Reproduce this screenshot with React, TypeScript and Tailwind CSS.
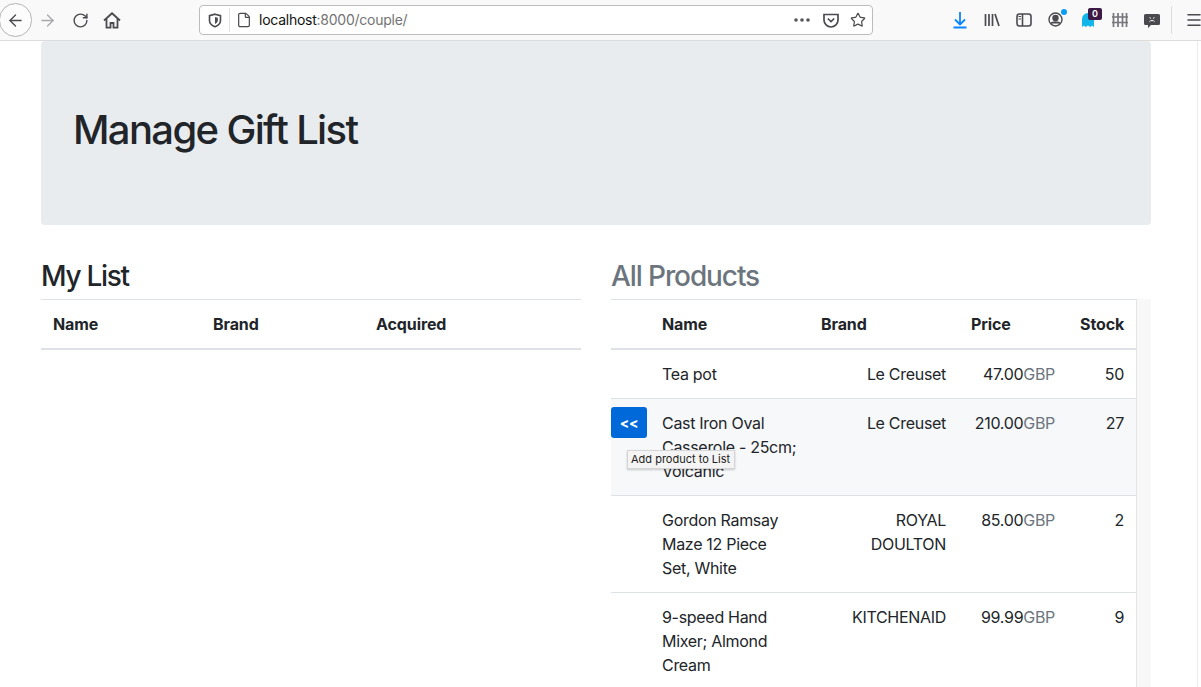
import { ArrowLeft, ArrowRight, RotateCw, File, Star, Menu } from 'lucide-react';

const font = '[font-family:Inter,"Liberation_Sans",sans-serif]';

interface Product {
  name: string[];
  brand: string[];
  price: string;
  stock: number;
}

const products: Product[] = [
  { name: ['Tea pot'], brand: ['Le Creuset'], price: '47.00', stock: 50 },
  { name: ['Cast Iron Oval', 'Casserole - 25cm;', 'Volcanic'], brand: ['Le Creuset'], price: '210.00', stock: 27 },
  { name: ['Gordon Ramsay', 'Maze 12 Piece', 'Set, White'], brand: ['ROYAL', 'DOULTON'], price: '85.00', stock: 2 },
  { name: ['9-speed Hand', 'Mixer; Almond', 'Cream'], brand: ['KITCHENAID'], price: '99.99', stock: 9 },
];

function Toolbar() {
  return (
    <div className="flex h-[41px] shrink-0 items-center overflow-hidden border-b border-[#dcdcdc] bg-[#f9f9fa] text-[#4a4a4f] [&>*]:shrink-0">
      <div className="ml-[-1px] flex h-[34px] w-[33px] items-center justify-center rounded-full border border-[#b4b4b4] bg-[#fcfcfc]">
        <ArrowLeft size={19} strokeWidth={1.7} />
      </div>
      <ArrowRight size={19} strokeWidth={1.7} className="ml-[6px] text-[#a9a9ab]" />
      <RotateCw size={17} strokeWidth={2} className="ml-[15px]" />
      <svg width="18" height="17" viewBox="0 0 18 17" className="ml-[14px]" fill="none" stroke="#4a4a4f" strokeWidth="1.800">
        <path d="M1 8.500 9 1.300l8 7.200" />
        <path d="M3.500 7v8.700h4v-4.700h3v4.700h4V7" />
      </svg>
      <div className="ml-[78px] flex h-[30px] w-[674px] items-center rounded-[4px] border border-[#bcbcbc] bg-white">
        <svg width="14" height="15" viewBox="0 0 14 15" className="ml-[8px]" fill="none" stroke="#4a4a4f" strokeWidth="1.600">
          <path d="M7 1.200 12.500 2.600v5c0 3-2.400 5-5.500 6.200C3.900 12.600 1.500 10.600 1.500 7.600v-5z" />
          <path d="M7 4 9.800 4.800v2.800c0 1.600-1.200 2.700-2.800 3.400z" fill="#4a4a4f" stroke="none" />
        </svg>
        <div className="ml-[7px] h-[24px] w-px bg-[#e2e2e2]" />
        <File size={16} strokeWidth={1.8} className="ml-[6px]" />
        <span className={`ml-[7px] text-[14px] tracking-[-0.25px] text-[#111] ${font}`}>
          localhost<span className="text-[#737373]">:8000/couple/</span>
        </span>
        <div className="ml-auto flex items-center">
          <svg width="16" height="4" viewBox="0 0 16 4" fill="#55555a">
            <circle cx="2" cy="2" r="1.800" />
            <circle cx="8" cy="2" r="1.800" />
            <circle cx="14" cy="2" r="1.800" />
          </svg>
          <svg width="16" height="15" viewBox="0 0 16 15" className="ml-[13px]" fill="none" stroke="#4a4a4f" strokeWidth="1.700">
            <path d="M1 1.500h14v5.500a7 7 0 0 1-14 0z" />
            <path d="m4.800 5.500 3.200 3 3.200-3" />
          </svg>
          <Star size={16} strokeWidth={1.8} className="ml-[11px] mr-[6px]" />
        </div>
      </div>
      <svg width="18" height="18" viewBox="0 0 18 18" className="ml-[78px]" fill="none" stroke="#0a84ff" strokeWidth="1.800">
        <path d="M9 1v12M4 8.500l5 5 5-5M2.500 16.500h13" />
      </svg>
      <svg width="16" height="14" viewBox="0 0 16 14" className="ml-[15px]" fill="none" stroke="#4a4a4f" strokeWidth="1.700">
        <path d="M1.500 1v12M5 1v12M8.500 1v12M11 1l4 12" />
      </svg>
      <svg width="16" height="14" viewBox="0 0 16 14" className="ml-[16px]" fill="none" stroke="#4a4a4f" strokeWidth="1.600">
        <rect x="1" y="1" width="14" height="12" rx="2.500" />
        <path d="M6.500 1v12" />
        <path d="M2.500 3.500h2.500M2.500 6h2.500" strokeWidth="1" />
      </svg>
      <div className="relative ml-[16px] h-[16px] w-[16px]">
        <svg width="15" height="15" viewBox="0 0 15 15" fill="none" stroke="#4a4a4f" strokeWidth="1.400">
          <circle cx="7.500" cy="7.500" r="6.500" />
          <circle cx="7.500" cy="6" r="2.500" fill="#4a4a4f" />
          <path d="M3 11.500c1-2 8-2 9 0" fill="#4a4a4f" />
        </svg>
        <div className="absolute right-[-3px] top-[-3px] h-[6px] w-[6px] rounded-full bg-[#0a9df5]" />
      </div>
      <div className="relative ml-[17px] h-[16px] w-[14px]">
        <svg width="14" height="16" viewBox="0 0 14 16" fill="#12b5ea">
          <path d="M1 7a6 6 0 0 1 12 0v8l-2-1.500L9.500 15 7 13.500 4.500 15 3 13.500 1 15z" />
        </svg>
        <div className={`absolute left-[7px] top-[-4px] flex h-[12px] w-[14px] items-center justify-center rounded-[2px] bg-[#3d1a45] text-[9px] font-semibold text-white ${font}`}>
          0
        </div>
      </div>
      <svg width="16" height="14" viewBox="0 0 16 14" className="ml-[17px]" fill="none" stroke="#77777b" strokeWidth="1.700">
        <path d="M1.500 0v14M6 0v14M10.500 0v14M14.500 0v14M0 4h16M0 9.500h16" />
      </svg>
      <svg width="16" height="15" viewBox="0 0 16 15" className="ml-[16px]" fill="#4a4a4f">
        <path d="M1.500 1h13A1.500 1.500 0 0 1 16 2.500v8a1.500 1.500 0 0 1-1.500 1.500H7l-3 3v-3H1.500A1.500 1.500 0 0 1 0 10.500v-8A1.500 1.500 0 0 1 1.500 1z" />
        <path d="M5.500 8.500c1-1.300 4-1.300 5 0M5.500 4.500l1.500 1M10.500 4.500 9 5.500" stroke="#f9f9fa" strokeWidth="1" fill="none" />
      </svg>
      <div className="ml-[11px] h-[28px] w-px bg-[#dcdcdc]" />
      <Menu size={18} strokeWidth={2} className="ml-[13px]" />
    </div>
  );
}

function ListHeader({ children, className = '' }: { children?: React.ReactNode; className?: string }) {
  return <th className={`border-b-2 border-[#dee2e6] p-3 font-bold tracking-[-0.1px] ${className}`}>{children}</th>;
}

function Cell({ children, className = '' }: { children?: React.ReactNode; className?: string }) {
  return <td className={`border-b border-[#dee2e6] p-3 align-top tracking-[-0.3px] ${className}`}>{children}</td>;
}

function Lines({ lines }: { lines: string[] }) {
  return (
    <>
      {lines.map(l => (
        <div key={l} className="whitespace-nowrap">{l}</div>
      ))}
    </>
  );
}

export default function App() {
  return (
    <div className={`flex h-[687px] w-[1201px] flex-col overflow-hidden bg-white text-[16px] leading-[24px] text-[#212529] ${font}`}>
      <Toolbar />
      <div className="relative flex-1 overflow-hidden">
        <div className="absolute bottom-0 right-[3px] top-0 w-px bg-[#ececec]" />
        <div className="ml-[41px] w-[1110px]">
          <div className="mb-[32px] flex h-[184px] items-center rounded-[4px] bg-[#e9ecef] pb-[6px] pl-[32px] pr-[32px]">
            <h1 className="text-[40px] font-medium leading-[48px] tracking-[-1.65px]">Manage Gift List</h1>
          </div>
          <div className="flex gap-[30px]">
            <div className="w-[540px]">
              <h3 className="mb-[6px] mt-[2px] text-[28px] font-medium leading-[34px] tracking-[-1.3px]">My List</h3>
              <table className="w-full border-collapse text-left">
                <thead>
                  <tr className="border-t border-[#dee2e6]">
                    <ListHeader className="w-[160px]">Name</ListHeader>
                    <ListHeader className="w-[163px]">Brand</ListHeader>
                    <ListHeader>Acquired</ListHeader>
                  </tr>
                </thead>
              </table>
            </div>
            <div className="w-[540px]">
              <h3 className="mb-[6px] mt-[2px] text-[28px] font-medium leading-[34px] tracking-[-1.1px] text-[#6c757d]">All Products</h3>
              <div className="flex bg-[#f8f8f8]">
                <table className="w-[526px] table-fixed border-collapse border-r border-[#e4e4e4] bg-white text-left">
                  <colgroup>
                    <col className="w-[39px]" />
                    <col className="w-[171px]" />
                    <col className="w-[150px]" />
                    <col className="w-[109px]" />
                    <col />
                  </colgroup>
                  <thead>
                    <tr className="border-t border-[#dee2e6]">
                      <ListHeader />
                      <ListHeader>Name</ListHeader>
                      <ListHeader className="pl-0">Brand</ListHeader>
                      <ListHeader className="pl-0">Price</ListHeader>
                      <ListHeader className="whitespace-nowrap pl-0 text-right">Stock</ListHeader>
                    </tr>
                  </thead>
                  <tbody>
                    {products.map((p, i) => (
                      <tr key={p.price} className={i === 1 ? 'bg-[#f7f8fa]' : ''}>
                        <Cell className="relative px-0">
                          {i === 1 && (
                            <>
                              <button className="-mt-[4px] block h-[31px] w-[36px] rounded-[3px] bg-[#0069d9] text-[14px] font-bold leading-[31px] text-white">
                                &lt;&lt;
                              </button>
                              <div className="absolute left-[16px] top-[51px] z-10 h-[19px] w-[108px] whitespace-nowrap border border-[#d5d5d5] bg-[#f4f4f4] px-[3px] text-[11px] leading-[17px] tracking-normal text-[#222] shadow-[0_1px_2px_rgba(0,0,0,0.2)]">
                                Add product to List
                              </div>
                            </>
                          )}
                        </Cell>
                        <Cell><Lines lines={p.name} /></Cell>
                        <Cell className="pl-0 pr-[25px] text-right"><Lines lines={p.brand} /></Cell>
                        <Cell className="pl-0 pr-[25px] text-right">
                          {p.price}<span className="text-[#6c757d]">GBP</span>
                        </Cell>
                        <Cell className="pl-0 text-right">{p.stock}</Cell>
                      </tr>
                    ))}
                  </tbody>
                </table>
              </div>
            </div>
          </div>
        </div>
      </div>
    </div>
  );
}
